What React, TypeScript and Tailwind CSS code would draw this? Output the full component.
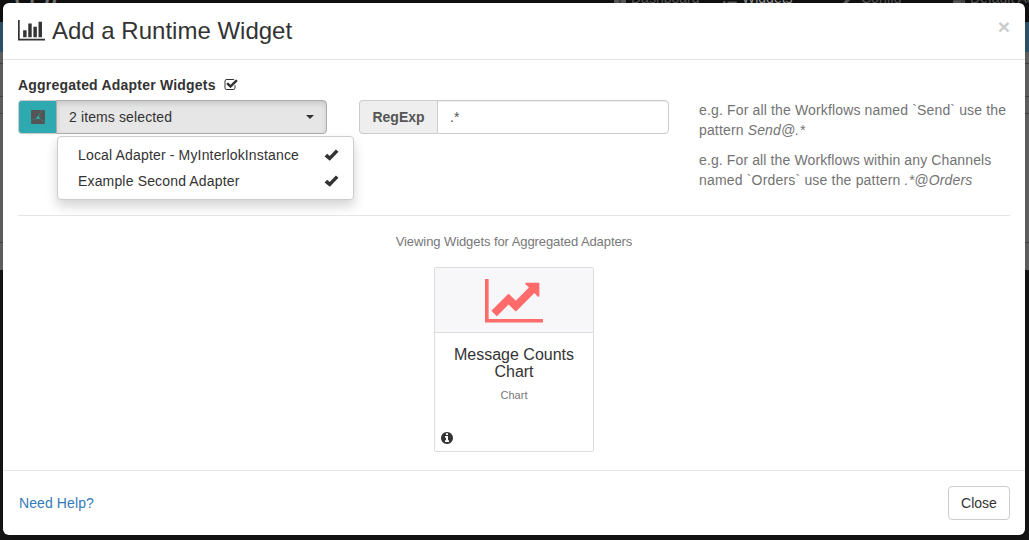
import React from "react";
import { FaThLarge, FaList, FaWrench, FaServer } from "react-icons/fa";

type IconProps = { className?: string };

const BarChart = ({ className }: IconProps) => (
  <svg viewBox="0 128 2048 1536" fill="currentColor" className={className}>
    <path d="M640 896v512h-256v-512h256zm384-512v1024h-256v-1024h256zm1024 1152v128h-2048v-1536h128v1408h1920zm-640-896v768h-256v-768h256zm384-384v1152h-256v-1152h256z" />
  </svg>
);

const LineChart = ({ className }: IconProps) => (
  <svg viewBox="0 128 2048 1536" fill="currentColor" className={className}>
    <path d="M2048 1536v128h-2048v-1536h128v1408h1920zm-128-1248v435q0 21-19.5 29.5t-35.5-7.5l-121-121-633 633q-10 10-23 10t-23-10l-233-233-416 416-192-192 585-585q10-10 23-10t23 10l233 233 464-464-121-121q-16-16-7.5-35.5t29.5-19.5h435q14 0 23 9t9 23z" />
  </svg>
);

const CheckSquare = ({ className }: IconProps) => (
  <svg viewBox="0 0 1792 1792" fill="currentColor" className={className}>
    <path d="M1472 930v318q0 119-84.5 203.5t-203.5 84.5h-832q-119 0-203.5-84.5t-84.5-203.5v-832q0-119 84.5-203.5t203.5-84.5h832q63 0 117 25 15 7 18 23 3 17-9 29l-49 49q-10 10-23 10-3 0-9-2-23-6-45-6h-832q-66 0-113 47t-47 113v832q0 66 47 113t113 47h832q66 0 113-47t47-113v-254q0-13 9-22l64-64q10-10 23-10 6 0 12 3 20 8 20 29zm231-489l-814 814q-24 24-57 24t-57-24l-430-430q-24-24-24-57t24-57l110-110q24-24 57-24t57 24l263 263 647-647q24-24 57-24t57 24l110 110q24 24 24 57t-24 57z" />
  </svg>
);

const InfoCircle = ({ className }: IconProps) => (
  <svg viewBox="128 128 1536 1536" fill="currentColor" className={className}>
    <path d="M1152 1376v-160q0-14-9-23t-23-9h-96v-512q0-14-9-23t-23-9h-320q-14 0-23 9t-9 23v160q0 14 9 23t23 9h96v320h-96q-14 0-23 9t-9 23v160q0 14 9 23t23 9h448q14 0 23-9t9-23zm-128-896v-160q0-14-9-23t-23-9h-192q-14 0-23 9t-9 23v160q0 14 9 23t23 9h192q14 0 23-9t9-23zm640 416q0 209-103 385.5t-279.5 279.5-385.5 103-385.5-103-279.5-279.5-103-385.5 103-385.5 279.5-279.5 385.5-103 385.5 103 279.5 279.5 103 385.5z" />
  </svg>
);

const Tick = ({ className }: IconProps) => (
  <svg viewBox="0 0 14 12" fill="currentColor" className={className}>
    <path d="M0.1 7.4 2.6 4.7 5.2 6.9 11.4 0.5 14 2.8 5.3 11.7Z" />
  </svg>
);

const AdapterIcon = ({ className }: IconProps) => (
  <svg viewBox="0 0 14 14" className={className}>
    <rect width="14" height="14" rx="1" fill="#555" />
    <path d="M10.8 0 7.4 5.6M5.4 8.6 0 10.6M8.8 8.8l5.2 3" stroke="#35858a" strokeWidth="0.7" fill="none" />
    <path d="M7.6 5 9 9.2 4.6 8.8Z" fill="#2fa9b0" />
  </svg>
);

const adapters = ["Local Adapter - MyInterlokInstance", "Example Second Adapter"];

function Backdrop() {
  return (
    <div className="absolute inset-0 flex flex-col overflow-hidden bg-[#161616]" aria-hidden="true">
      <div className="relative h-[22px] shrink-0 overflow-hidden bg-[#111] text-[14px] leading-[20px] text-[#5a5a5a]">
        <span className="absolute left-[14px] -top-[15px] text-[22px] font-bold text-[#777]">{"(•|•))"}</span>
        <div className="absolute left-[614px] -top-[12px] flex items-center whitespace-nowrap">
          <FaThLarge className="mr-[5px] size-[12px]" /><span className="w-[92px]">Dashboard</span>
          <FaList className="mr-[5px] size-[14px]" /><span className="w-[101px] text-[#999]">Widgets</span>
          <FaWrench className="mr-[5px] size-[13px]" /><span className="w-[92px]">Config</span>
          <FaServer className="mr-[5px] size-[12px]" /><span>Default Adapter</span>
        </div>
      </div>
      <div className="h-[30px] shrink-0 bg-[#315a75]" />
      <div className="h-[12px] shrink-0 border-b border-[#4a4a4a] bg-[#6a6a6a]" />
      <div className="h-[33px] shrink-0 border-b border-[#4a4a4a] bg-[#6a6a6a]" />
      <div className="h-[17px] shrink-0 border-b border-[#4a4a4a] bg-[#6a6a6a]" />
      <div className="h-[129px] shrink-0 border-b border-[#4a4a4a] bg-[#6a6a6a]" />
      <div className="h-[27px] shrink-0 bg-[#6a6a6a]" />
    </div>
  );
}

export default function App() {
  return (
    <div className="relative h-[540px] w-[1029px] overflow-hidden font-['Liberation_Sans',Arial,sans-serif] text-[14px] leading-[20px] text-[#333]">
      <Backdrop />
      <div className="relative mt-[3px] ml-[3px] flex h-[532px] w-[1022px] flex-col rounded-[6px] bg-white shadow-[0_5px_15px_rgba(0,0,0,0.3)]">
        <header className="flex h-[57px] shrink-0 items-start border-b border-[#e5e5e5] px-[15px] pt-[14px]">
          <BarChart className="mt-[3px] h-[20.6px] w-[27.4px]" />
          <h4 className="ml-[6.6px] text-[24px] leading-[28px] whitespace-nowrap">Add a Runtime Widget</h4>
          <button className="-mt-px ml-auto text-[21px] leading-[21px] font-bold text-[#ccc]">×</button>
        </header>

        <main className="flex h-[410px] shrink-0 flex-col px-[15px] pt-[15px]">
          <div className="flex h-[140px] shrink-0">
            <div className="w-[309px]">
              <div className="flex h-[25px] items-start font-bold">
                <span className="whitespace-nowrap tracking-[0.21px]">Aggregated Adapter Widgets</span>
                <CheckSquare className="mt-[3px] ml-[8px] size-[14px]" />
              </div>
              <div className="relative flex h-[34px]">
                <div className="flex w-[38px] items-center justify-center rounded-l-[4px] border border-r-0 border-[#ccc] bg-[#2fa9b0]">
                  <AdapterIcon className="size-[14px]" />
                </div>
                <button className="flex flex-1 items-center justify-between rounded-r-[4px] border border-[#adadad] bg-[#e6e6e6] px-[12px] shadow-[inset_0_3px_5px_rgba(0,0,0,0.125)]">
                  <span className="tracking-[0.12px]">2 items selected</span>
                  <span className="border-x-4 border-t-4 border-x-transparent border-t-[#333]" />
                </button>
                <ul className="absolute top-[36px] left-[39px] z-10 h-[64px] w-[297px] rounded-[4px] border border-[#ccc] bg-white py-[5px] shadow-[0_6px_12px_rgba(0,0,0,0.175)]">
                  {adapters.map((name) => (
                    <li key={name} className="flex h-[26px] items-center justify-between pr-[14px] pl-[20px]">
                      <span className="whitespace-nowrap tracking-[0.16px]">{name}</span>
                      <Tick className="h-[12px] w-[15px]" />
                    </li>
                  ))}
                </ul>
              </div>
            </div>
            <div className="mt-[25px] ml-[32px] flex h-[34px] w-[310px]">
              <span className="flex w-[78px] items-center justify-center rounded-l-[4px] border border-r-0 border-[#ccc] bg-[#eee] font-bold text-[#555]">RegExp</span>
              <span className="flex flex-1 items-center rounded-r-[4px] border border-[#ccc] px-[12px] text-[#555] shadow-[inset_0_1px_1px_rgba(0,0,0,0.075)]">.*</span>
            </div>
            <div className="mt-[25px] ml-[30px] text-[#737373]">
              <p className="mb-[10px] whitespace-nowrap tracking-[0.15px]">e.g. For all the Workflows named `Send` use the<br />pattern <em>Send@.*</em></p>
              <p className="whitespace-nowrap tracking-[0.12px]">e.g. For all the Workflows within any Channels<br /><span className="tracking-[0.18px]">named `Orders` use the pattern <em>.*@Orders</em></span></p>
            </div>
          </div>
          <hr className="border-[#e5e5e5]" />
          <p className="mt-[16px] text-center text-[13px] leading-[20px] tracking-[-0.08px] text-[#777]">Viewing Widgets for Aggregated Adapters</p>
          <div className="mx-auto mt-[15px] flex h-[185px] w-[160px] flex-col rounded-[2px] border border-[#ddd] text-center">
            <div className="flex h-[65px] items-center justify-center border-b border-[#ddd] bg-[#f7f7f9] pt-[2px]">
              <LineChart className="h-[43.5px] w-[58px] text-[#ff6b6b]" />
            </div>
            <h5 className="mt-[13px] text-[16px] leading-[17px]">Message Counts<br />Chart</h5>
            <small className="mt-[7px] text-[11px] leading-[16px] text-[#777]">Chart</small>
            <InfoCircle className="mt-auto mb-[7px] ml-[6px] size-[12px]" />
          </div>
        </main>

        <footer className="flex h-[65px] shrink-0 items-center justify-between border-t border-[#e5e5e5] px-[15px]">
          <a className="ml-px tracking-[0.1px] text-[#337ab7]">Need Help?</a>
          <button className="h-[34px] w-[62px] rounded-[4px] border border-[#ccc] bg-white">Close</button>
        </footer>
      </div>
    </div>
  );
}
